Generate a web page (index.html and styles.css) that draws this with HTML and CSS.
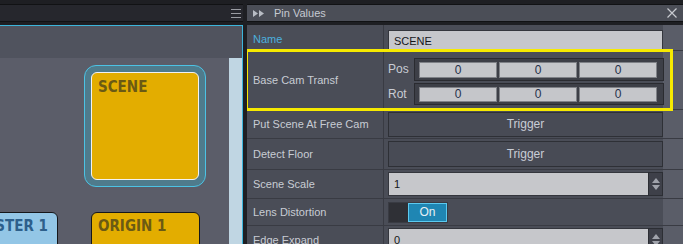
FILE: index.html
```html
<!DOCTYPE html>
<html lang="en">
<head>
  <meta charset="UTF-8">
  <title>Pin Values</title>
  <link rel="stylesheet" href="styles.css">
</head>
<body>

  <div class="topline"></div>

  <div class="panes">
    <!-- Graph -->
    <div class="pane graph">
      <div class="pane-head graph-head">
        <svg class="menu-icon" width="10" height="10" viewBox="0 0 10 10">
          <path d="M0 1.5H10M0 5.5H10M0 9.5H10" stroke="#9a9ca2" stroke-width="1"/>
        </svg>
      </div>
      <div class="canvas">
        <div class="canvas-band"></div>
        <div class="canvas-scroll"></div>
        <div class="node-frame">
          <div class="node node-scene">SCENE</div>
        </div>
        <div class="node node-master">MASTER 1</div>
        <div class="node node-origin">ORIGIN 1</div>
      </div>
    </div>

    <!-- Pin Values -->
    <div class="pane pins">
      <div class="pane-head pins-head">
        <svg class="play-icon" width="11" height="7" viewBox="0 0 11 7">
          <path d="M0 0L5 3.5L0 7ZM6 0L11 3.5L6 7Z" fill="#b8bcc4"/>
        </svg>
        <span class="title">Pin Values</span>
        <svg class="close-icon" width="10" height="10" viewBox="0 0 10 10">
          <path d="M0.5 0.5L9.5 9.5M9.5 0.5L0.5 9.5" stroke="#c8cad0" stroke-width="1.2"/>
        </svg>
      </div>

      <div class="pin-list">
        <div class="row row-name">
          <div class="label label-active">Name</div>
          <div class="value"><div class="field">SCENE</div></div>
        </div>

        <div class="row row-transform">
          <div class="label">Base Cam Transf</div>
          <div class="value vec-grid">
            <div class="sub-label">Pos</div>
            <div class="vec">
              <div class="vec-cell">0</div><div class="vec-cell">0</div><div class="vec-cell">0</div>
            </div>
            <div class="sub-label">Rot</div>
            <div class="vec">
              <div class="vec-cell">0</div><div class="vec-cell">0</div><div class="vec-cell">0</div>
            </div>
          </div>
        </div>

        <div class="row row-put">
          <div class="label">Put Scene At Free Cam</div>
          <div class="value"><div class="btn btn-sm">Trigger</div></div>
        </div>

        <div class="row row-detect">
          <div class="label">Detect Floor</div>
          <div class="value"><div class="btn">Trigger</div></div>
        </div>

        <div class="row row-scale">
          <div class="label">Scene Scale</div>
          <div class="value">
            <div class="field field-num">1</div>
            <div class="spinner"><span class="up"></span><span class="down"></span></div>
          </div>
        </div>

        <div class="row row-lens">
          <div class="label">Lens Distortion</div>
          <div class="value">
            <div class="toggle"><span class="toggle-off"></span><span class="toggle-on">On</span></div>
          </div>
        </div>

        <div class="row row-edge">
          <div class="label">Edge Expand</div>
          <div class="value">
            <div class="field field-num">0</div>
            <div class="spinner"><span class="up"></span><span class="down"></span></div>
          </div>
        </div>

        <!-- selection highlight -->
        <div class="highlight"></div>
      </div>
    </div>
  </div>

</body>
</html>
```

FILE: styles.css
```css
* {
  margin: 0;
  padding: 0;
  box-sizing: border-box;
}

body {
  font-family: 'Liberation Sans', Arial, sans-serif;
  font-size: 11px;
  background-color: #1e1f23;
  width: 683px;
  height: 244px;
  overflow: hidden;
}

.topline {
  height: 4px;
}

.panes {
  display: flex;
  gap: 4px;
  height: 240px;
}

.pane {
  display: flex;
  flex-direction: column;
  overflow: hidden;
}

.graph {
  width: 243px;
}

.pins {
  flex: 1;
}

/* Headers */
.pane-head {
  flex-shrink: 0;
  height: 18px;
  margin-bottom: 3px;
  display: flex;
  align-items: center;
  border-top: 1px solid #111214;
  border-bottom: 1px solid #111214;
}

.graph-head {
  background-color: #26272d;
  justify-content: flex-end;
  padding-right: 2px;
}

.menu-icon {
  margin-top: -1px;
}

.pins-head {
  background-color: #4b4e57;
  padding: 0 6px;
}

.pins-head .title {
  color: #c6cad2;
  margin-left: 10px;
}

.pins-head .close-icon {
  margin-left: auto;
}

/* Graph canvas */
.canvas {
  position: relative;
  flex: 1;
  flex-shrink: 0;
  background-color: #5b5d69;
  border-top: 1px solid #3cb6dc;
  border-right: 1px solid #3cb6dc;
}

.canvas-band {
  height: 32px;
  background-color: #50535e;
}

.canvas-scroll {
  position: absolute;
  top: 32px;
  right: 0;
  bottom: 0;
  width: 13px;
  background-color: #c0d6e3;
}

.node-frame {
  position: absolute;
  left: 84px;
  top: 39px;
  width: 122px;
  height: 122px;
  padding: 6px;
  border: 1px solid #4cc3e4;
  border-radius: 12px;
  background-color: #4f7b8c;
}

.node {
  font-family: 'DejaVu Sans Condensed', 'DejaVu Sans', sans-serif;
  font-weight: bold;
  font-size: 15px;
  line-height: 18px;
  border-radius: 6px;
  white-space: nowrap;
}

.node-scene {
  width: 108px;
  height: 108px;
  background-color: #e3ad00;
  border: 1px solid #f2f2f2;
  color: #6b5a14;
  padding: 5px 6px;
}

.node-origin,
.node-master {
  position: absolute;
  top: 186px;
  height: 60px;
  border: 1px solid #16171a;
  padding: 4px 6px;
}

.node-origin {
  left: 91px;
  width: 109px;
  background-color: #e3ad00;
  color: #6b5a14;
}

.node-master {
  left: -52px;
  width: 110px;
  background-color: #93c6e6;
  color: #2d5f8b;
  text-align: right;
  padding-right: 9px;
}

/* Pin list */
.pin-list {
  position: relative;
  flex: 1;
  flex-shrink: 0;
  background-color: #5a5d68;
}

.row {
  display: flex;
  border-bottom: 1px solid #393b43;
}

.label {
  width: 137px;
  padding-left: 6px;
  display: flex;
  align-items: center;
  color: #c8ccd4;
  background-color: #4a4d57;
  border-right: 1px solid #393b43;
  white-space: nowrap;
}

.label-active {
  color: #4cb0de;
  padding-top: 3px;
}

.value {
  width: 279px;
  padding-left: 4px;
  display: flex;
  align-items: center;
  background-color: #4a4d57;
}

.row-name { height: 26px; }
.row-transform { height: 59px; }
.row-put { height: 29px; }
.row-detect { height: 31px; }
.row-scale { height: 29px; }
.row-lens { height: 27px; }
.row-edge { height: 29px; }

.field {
  flex: 1;
  height: 22px;
  display: flex;
  align-items: center;
  padding-left: 5px;
  background-color: #c6c7cb;
  border: 1px solid #34363d;
  color: #15161a;
}

.row-name .field {
  align-self: flex-end;
  margin-bottom: -2px;
}

.field-num {
  height: 24px;
  border-right: none;
}

.spinner {
  width: 15px;
  height: 24px;
  background-color: #3e4049;
  border: 1px solid #2c2e34;
  display: flex;
  flex-direction: column;
  align-items: center;
  justify-content: center;
  gap: 2px;
}

.spinner .up {
  border-left: 4px solid transparent;
  border-right: 4px solid transparent;
  border-bottom: 5px solid #a0a3ab;
}

.spinner .down {
  border-left: 4px solid transparent;
  border-right: 4px solid transparent;
  border-top: 5px solid #a0a3ab;
}

.btn {
  flex: 1;
  height: 26px;
  display: flex;
  align-items: center;
  justify-content: center;
  background-color: #484b55;
  border: 1px solid #2e3036;
  color: #c9cdd6;
  font-size: 12px;
}

.btn-sm {
  height: 25px;
}

/* Vector rows */
.vec-grid {
  display: grid;
  grid-template-columns: 26px 250px;
  grid-template-rows: 23px 22px;
  row-gap: 2px;
  align-content: center;
  align-items: center;
  padding-left: 4px;
  padding-top: 2px;
}

.sub-label {
  color: #c8ccd4;
  font-size: 12px;
}

.vec {
  height: 100%;
  display: flex;
  gap: 2px;
  padding: 3px 6px 2px 4px;
  background-color: #3d3f47;
  border: 1px solid #2a2b30;
}

.vec-cell {
  flex: 1;
  display: flex;
  align-items: center;
  justify-content: center;
  background-color: #c5c6ca;
  border: 1px solid #7f8187;
  color: #26304a;
  font-size: 12px;
}

/* Toggle */
.toggle {
  display: flex;
  height: 21px;
  width: 60px;
  border: 1px solid #393b43;
}

.toggle-off {
  width: 19px;
  background-color: #2f3036;
}

.toggle-on {
  flex: 1;
  display: flex;
  align-items: center;
  justify-content: center;
  background-color: #1f86b3;
  border: 1px solid #5ccaf0;
  color: #e6f0f5;
  font-size: 12px;
}

/* Selection highlight */
.highlight {
  position: absolute;
  left: -2px;
  top: 24px;
  width: 428px;
  height: 62px;
  border: 3px solid #f6ea00;
  pointer-events: none;
}
```
